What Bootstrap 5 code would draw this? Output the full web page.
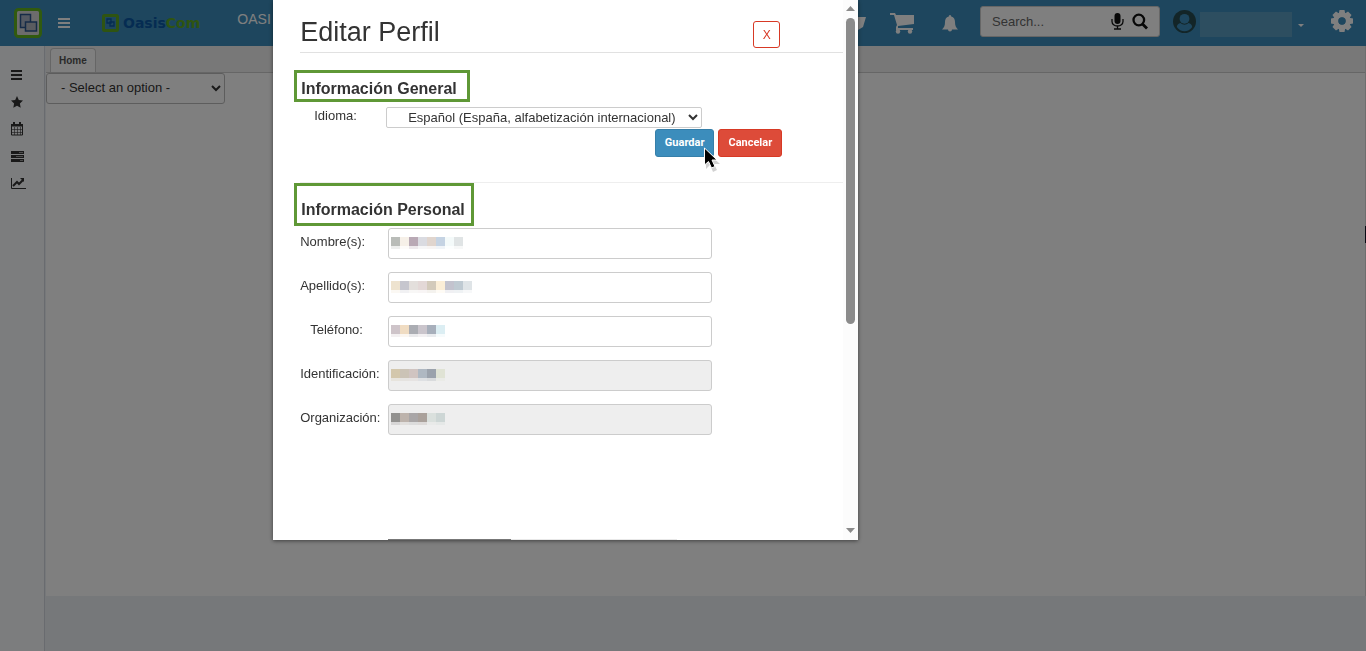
<!DOCTYPE html>
<html lang="es">
<head>
<meta charset="utf-8">
<meta name="viewport" content="width=device-width, initial-scale=1">
<title>OasisCom - Editar Perfil</title>
<link href="https://cdn.jsdelivr.net/npm/bootstrap@5.3.0/dist/css/bootstrap.min.css" rel="stylesheet">
<style>
  body { font-family: "Liberation Sans", Arial, sans-serif; font-size: 13px; line-height: 18px; color: #333; background: #ecf0f5; overflow: hidden; }
  svg { display: block; flex: none; }
  .topbar { height: 46px; background: #3c8dbc; padding: 0 13px 0 14px; color: #fff; }
  .topbar button, .side button { border: 0; padding: 0; background: none; color: inherit; }
  .brand-blue { color: #0a58a5; }
  .brand-green { color: #5fa823; }
  .brand-name { font: bold 14px/20px "DejaVu Sans", sans-serif; }
  .company { font-size: 14px; margin: 0 0 8px 37px; }
  .search { width: 180px; height: 31px; background: #fff; border: 1px solid #ccc; border-radius: 3px; color: #222; margin: 0 13px 3px 22px; padding: 0 11px; }
  .search input { border: 0; background: none; outline: 0; min-width: 0; font-size: 13px; padding: 0; }
  .search input::placeholder { color: #666; opacity: 1; }
  .user-mask { width: 92px; height: 25px; background: #5a9cc0; margin: 3px 6px 0 4px; }
  .topbar .settings { margin-left: 27px; }
  .side { width: 45px; background: #f9fafc; border-right: 1px solid #d2d6de; padding: 20px 0 0 10px; gap: 9px; }
  .work { background: #fff; margin-left: 1px; border-right: 1px solid #ddd; }
  .strip { height: 27px; background: #f0f0f0; border-bottom: 1px solid #ccc; padding-left: 4px; }
  .tab-home { height: 24px; background: #fff; border: 1px solid #ccc; border-bottom: 0; border-radius: 4px 4px 0 0; color: #555; font-size: 10px; font-weight: bold; padding: 3px 8px; text-decoration: none; }
  .option-select { width: 179px; height: 31px; border: 1px solid #bbb; border-radius: 3px; background: #fff; color: #333; padding: 0 0 2px 10px; font-size: 13px; }
  .foot { height: 55px; }
  .veil { background: rgba(0, 0, 0, .5); }
  .profile { width: 585px; max-width: 80%; height: 83vh; margin: 0 0 0 20%; background: #fff; box-shadow: 0 1px 4px rgba(0, 0, 0, .5); }
  .profile-head { height: 53px; margin-left: 27px; padding-right: 63px; border-bottom: 1px solid #e1e1e1; }
  .profile-head h2 { font-size: 27px; line-height: 32px; font-weight: 400; margin: 16px 0 0; }
  .btn-x { width: 27px; height: 27px; border: 1px solid #d73925; border-radius: 3px; color: #d73925; background: #fff; padding: 0; font-size: 12px; margin-top: 21px; }
  .boxed { width: fit-content; border: 3px solid #5f9836; font-size: 16px; line-height: 20px; font-weight: bold; margin: 0 0 0 21px; padding: 6px 10px 0 4px; }
  .boxed-tall { padding-top: 14px; padding-bottom: 3px; padding-right: 6px; }
  .general { margin-top: 17px; }
  .lang-row { margin-left: 27px; padding-top: 5px; }
  .lang-label { width: 86px; padding-left: 14px; }
  .lang-select { width: 316px; height: 21px; border: 1px solid #ccc; border-radius: 2px; background: #fff; color: #333; padding: 0 0 0 17px; font-size: 13px; }
  .actions { margin: 1px 61px 25px 0; gap: 4px; }
  .actions .btn { height: 28px; border-radius: 3px; font: bold 11px/16px Roboto, sans-serif; padding: 0 9px; color: #fff; }
  .actions .btn-save { background: #3c8dbc; border-color: #367fa9; }
  .actions .btn-cancel { background: #dd4b39; border-color: #d73925; }
  .rule { border-top: 1px solid #eee; margin-left: 27px; }
  .field-row { margin: 0 131px 13px 27px; }
  .boxed + .field-row { padding-top: 2px; }
  .field-row label { width: 88px; padding-top: 5px; white-space: nowrap; }
  .field-row .inset { padding-left: 10px; }
  .field-row input { width: 100%; height: 31px; border: 1px solid #ccc; border-radius: 3px; background: #fff; }
  .field-row input:disabled { background: #eee; }
  .mask { left: 3px; top: 9px; }
  .pointer { left: 48px; top: 18px; }
  .next-block { height: 1px; margin: 0 166px 0 115px; background: #e8e8e8; }
  .next-block div { width: 123px; background: #777; }
  .scroller { width: 15px; background: #fcfcfc; color: #8b8b8b; padding: 6px 0; }
  .thumb { width: 9px; height: 306px; border-radius: 5px; background: #8b8b8b; margin-top: 6px; }
  .edge-tab { right: 0; top: 226px; width: 1px; height: 17px; background: #0a0a14; z-index: 1060; }
</style>
</head>
<body>
<svg class="d-none">
  <symbol id="i-bars" viewBox="0 0 12 10"><path fill="currentColor" d="M0 0h12v2H0zM0 4h12v2H0zM0 8h12v2H0z"/></symbol>
</svg>
<div class="d-flex flex-column vh-100">
  <header class="topbar d-flex align-items-center">
    <svg width="28" height="30" viewBox="0 0 28 30"><rect x="1.500" y="1.500" width="25" height="27" rx="3" fill="#d8d8d8" stroke="#62b51e" stroke-width="3"/><rect x="6.500" y="6.500" width="10" height="13" fill="#a9b3c4" stroke="#2d578f" stroke-width="1.500"/><rect x="11.500" y="14" width="11" height="9" fill="#b4b8c0" stroke="#2d578f" stroke-width="1.500"/></svg>
    <button class="ms-3" aria-label="Menú"><svg width="12" height="10"><use href="#i-bars"/></svg></button>
    <a href="#" class="d-flex align-items-center text-decoration-none ms-4 ps-2">
      <svg class="me-1" width="17" height="18" viewBox="0 0 17 18"><rect x="1.500" y="1.500" width="14" height="15" rx="1" fill="none" stroke="#5fa823" stroke-width="3"/><path d="M5 5h4v4H5zM8 8h4v4H8z" fill="none" stroke="#0a58a5" stroke-width="1.300"/></svg>
      <span class="brand-name"><span class="brand-blue">Oasis</span><span class="brand-green">Com</span></span>
    </a>
    <span class="company">OASI</span>
    <svg class="ms-auto" width="14" height="16" viewBox="0 0 14 16"><path fill="#fff" d="M0 2h14l-3 10-5 3H0z"/></svg>
    <button class="ms-4" aria-label="Carrito"><svg width="24" height="22" viewBox="0 0 24 22"><path fill="#fff" d="M0 1h5l1 2h18v9L8 14v2h15v2H6v-3l1-2L4 3H0z"/><circle cx="8" cy="19.500" r="2.200" fill="#fff"/><circle cx="20" cy="19.500" r="2.200" fill="#fff"/></svg></button>
    <button class="ms-4 ps-1" aria-label="Avisos"><svg width="16" height="17" viewBox="0 0 16 17"><path fill="#fff" d="M8 0a1.300 1.300 0 0 1 1.200 1.500C12 2 13 4.500 13 7c0 4 1 5.500 3 7.500h-6a2 2 0 0 1-4 0H0C2 12.500 3 11 3 7c0-2.500 1-5 3.800-5.500A1.300 1.300 0 0 1 8 0z"/></svg></button>
    <form class="search d-flex align-items-center">
      <input class="flex-grow-1" type="text" placeholder="Search..." aria-label="Search">
      <svg class="me-2" width="13" height="17" viewBox="0 0 13 17"><rect x="3.500" width="6" height="11" rx="3" fill="#111"/><path d="M1 6v2.500a5.500 4.500 0 0 0 11 0V6M6.500 13v3M3 16h7" fill="none" stroke="#111" stroke-width="1.300"/></svg>
      <svg width="16" height="17" viewBox="0 0 16 17"><circle cx="6.800" cy="7" r="5.300" fill="none" stroke="#111" stroke-width="2.300"/><path d="M10.500 11l4.500 4.500" stroke="#111" stroke-width="2.800"/></svg>
    </form>
    <svg class="mb-1" width="23" height="23" viewBox="0 0 23 23"><circle cx="11.500" cy="11.500" r="11.500" fill="#264a50"/><circle cx="11.500" cy="8.800" r="4.900" fill="#3c8dbc"/><path fill="#3c8dbc" d="M3.800 17c.4-2.600 1.700-3.600 3.700-4 2.400 2.200 5.600 2.200 8 0 2 .4 3.300 1.400 3.700 4-3.800 5.600-11.600 5.600-15.400 0z"/></svg>
    <div class="user-mask"></div>
    <svg class="mt-1" width="6" height="3"><path fill="#fff" d="M0 0h6L3 3z"/></svg>
    <button class="settings" aria-label="Configuración"><svg class="mb-1" width="22" height="22" viewBox="-11 -11 22 22"><g fill="#fff"><path id="t" d="M-2.500-11h5l1 5h-7zM-2.500 11h5l1-5h-7zM-11-2.500v5l5 1v-7zM11-2.500v5l-5 1v-7z"/><use href="#t" transform="rotate(45)"/></g><circle r="6" fill="none" stroke="#fff" stroke-width="5"/><circle r="3.700" fill="#3c8dbc"/></svg></button>
  </header>
  <div class="d-flex flex-grow-1">
    <nav class="side d-flex flex-column align-items-start">
      <button aria-label="Menú"><svg width="14" height="18" viewBox="0 0 14 18"><path d="M1 5h11M1 9h11M1 13h11" stroke="#333" stroke-width="2"/></svg></button>
      <button aria-label="Favoritos"><svg width="14" height="18" viewBox="0 0 14 18"><path fill="#333" d="M7 3l1.800 4 4.200.5-3.100 3 .8 4.300L7 12.700l-3.700 2.100.8-4.300L1 7.500 5.200 7z"/></svg></button>
      <button aria-label="Calendario"><svg width="14" height="18" viewBox="0 0 14 18"><path d="M1.500 5h11v10h-11z" fill="none" stroke="#333"/><path d="M1 9.500h12M1 12.500h12M4.500 7v8M7.500 7v8M10.500 7v8" stroke="#333" stroke-width=".6"/><path fill="#333" d="M1 4h12v2.500H1zM3 2h2v3H3zM9 2h2v3H9z"/></svg></button>
      <button aria-label="Tareas"><svg width="14" height="18" viewBox="0 0 14 18"><path fill="#333" d="M1 4h13v3H1zM1 8h13v3H1zM1 12h13v3H1z"/><path d="M9 5.500h4M6 9.500h7M10 13.500h3" stroke="#999"/></svg></button>
      <button aria-label="Gráficos"><svg width="16" height="18" viewBox="0 0 16 18"><path d="M1.500 4v10.500H16" fill="none" stroke="#333"/><path d="M3 12l4-4 2 2 4-4" fill="none" stroke="#333" stroke-width="2"/><path fill="#333" d="M10 4h4v4z"/></svg></button>
    </nav>
    <div class="d-flex flex-column flex-grow-1">
      <main class="work flex-grow-1">
        <div class="strip d-flex align-items-end"><a href="#" class="tab-home">Home</a></div>
        <select class="option-select d-block" aria-label="Opción"><option>- Select an option -</option></select>
      </main>
      <div class="foot"></div>
    </div>
  </div>
</div>

<div class="modal d-block veil overflow-hidden" role="dialog" aria-labelledby="title">
  <div class="profile d-flex">
    <div class="d-flex flex-column flex-grow-1 overflow-hidden">
      <div class="profile-head d-flex justify-content-between align-items-start">
        <h2 id="title">Editar Perfil</h2>
        <button class="btn-x">X</button>
      </div>
      <h4 class="boxed general">Información General</h4>
      <div class="lang-row d-flex align-items-start">
        <label class="lang-label" for="lang">Idioma:</label>
        <select id="lang" class="lang-select"><option>Español (España, alfabetización internacional)</option></select>
      </div>
      <div class="actions d-flex justify-content-end">
        <div class="position-relative">
          <button class="btn btn-save">Guardar</button>
          <svg class="pointer position-absolute" width="18" height="28" viewBox="0 0 18 28"><path d="M3 4v18l4-4 3 7 4-2-3-6h6z" fill="#000" opacity=".18"/><path d="M1.500 1v17l4-3.500 3 6.500 3.500-1.500-3-6.500h5z" fill="#000" stroke="#fff"/></svg>
        </div>
        <button class="btn btn-cancel">Cancelar</button>
      </div>
      <div class="rule"></div>
      <h4 class="boxed boxed-tall">Información Personal</h4>
      <div class="field-row d-flex"><label for="f1">Nombre(s):</label><div class="position-relative flex-grow-1"><input id="f1" type="text"><svg class="mask position-absolute" width="81" height="13" data-c="b9bcb8,f6f0e8,b9a9b5,dadbe1,e0d5ce,c5d3e3,f4fafa,e0e4e5"></svg></div></div>
      <div class="field-row d-flex"><label for="f2">Apellido(s):</label><div class="position-relative flex-grow-1"><input id="f2" type="text"><svg class="mask position-absolute" width="81" height="13" data-c="eee3cf,c6c6ce,e3dfdc,e3d8d7,d3cabb,fbeed7,c3c3ce,bfcad2,dfe4e7"></svg></div></div>
      <div class="field-row d-flex"><label class="inset" for="f3">Teléfono:</label><div class="position-relative flex-grow-1"><input id="f3" type="text"><svg class="mask position-absolute" width="81" height="13" data-c="cec4c9,f0dcc2,abadb3,cac5cc,a7afbb,dceef3"></svg></div></div>
      <div class="field-row d-flex"><label for="f4">Identificación:</label><div class="position-relative flex-grow-1"><input id="f4" type="text" disabled><svg class="mask position-absolute" width="81" height="13" data-c="d3c7ac,cbc3b6,d0c4c1,afb8c2,9ba2ac,e0e3d5"></svg></div></div>
      <div class="field-row d-flex"><label for="f5">Organización:</label><div class="position-relative flex-grow-1"><input id="f5" type="text" disabled><svg class="mask position-absolute" width="81" height="13" data-c="92918f,bdb3ac,a9a6a7,aaa19b,dae0dd,cdd6d5"></svg></div></div>
      <div class="next-block d-flex mt-auto"><div></div></div>
    </div>
    <div class="scroller d-flex flex-column align-items-center" aria-hidden="true">
      <svg width="9" height="6"><path fill="currentColor" d="M0 5h9L4.500 0z"/></svg>
      <div class="thumb"></div>
      <svg class="mt-auto" width="9" height="6"><path fill="currentColor" d="M0 0h9L4.500 5z"/></svg>
    </div>
  </div>
</div>
<div class="edge-tab position-fixed"></div>
<script src="https://cdn.jsdelivr.net/npm/bootstrap@5.3.0/dist/js/bootstrap.bundle.min.js"></script>
<script>
  // Fill each masked value with its row of colour cells and a paler row beneath.
  document.querySelectorAll('.mask').forEach(function (m) {
    m.innerHTML = m.dataset.c.split(',').map(function (c, i) {
      var r = '<rect width="9" fill="#' + c + '" x="' + i * 9 + '" ';
      return r + 'height="9"/>' + r + 'y="9" height="3" opacity=".25"/>';
    }).join('');
  });
</script>
</body>
</html>
